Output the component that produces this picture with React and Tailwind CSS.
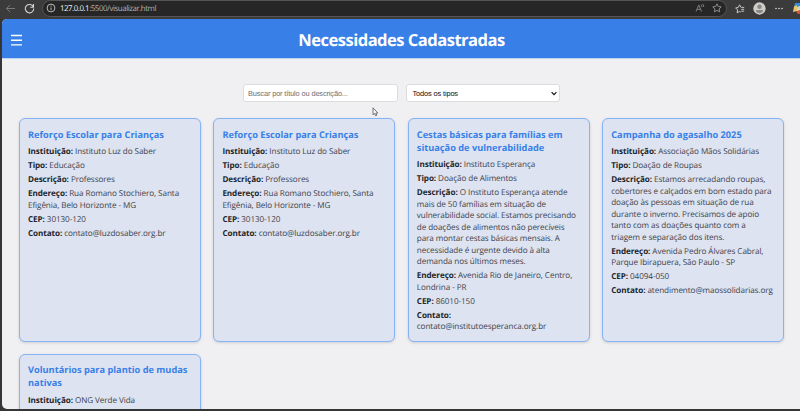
import React from "react";

const cards = [
  {
    title: ["Reforço Escolar para Crianças"],
    fields: [
      ["Instituição:", "Instituto Luz do Saber"],
      ["Tipo:", "Educação"],
      ["Descrição:", "Professores"],
      ["Endereço:", "Rua Romano Stochiero, Santa", "Efigênia, Belo Horizonte - MG"],
      ["CEP:", "30130-120"],
      ["Contato:", "contato@luzdosaber.org.br"],
    ],
  },
  {
    title: ["Reforço Escolar para Crianças"],
    fields: [
      ["Instituição:", "Instituto Luz do Saber"],
      ["Tipo:", "Educação"],
      ["Descrição:", "Professores"],
      ["Endereço:", "Rua Romano Stochiero, Santa", "Efigênia, Belo Horizonte - MG"],
      ["CEP:", "30130-120"],
      ["Contato:", "contato@luzdosaber.org.br"],
    ],
  },
  {
    title: ["Cestas básicas para famílias em", "situação de vulnerabilidade"],
    fields: [
      ["Instituição:", "Instituto Esperança"],
      ["Tipo:", "Doação de Alimentos"],
      [
        "Descrição:",
        "O Instituto Esperança atende",
        "mais de 50 famílias em situação de",
        "vulnerabilidade social. Estamos precisando",
        "de doações de alimentos não perecíveis",
        "para montar cestas básicas mensais. A",
        "necessidade é urgente devido à alta",
        "demanda nos últimos meses.",
      ],
      ["Endereço:", "Avenida Rio de Janeiro, Centro,", "Londrina - PR"],
      ["CEP:", "86010-150"],
      ["Contato:", "", "contato@institutoesperanca.org.br"],
    ],
  },
  {
    title: ["Campanha do agasalho 2025"],
    fields: [
      ["Instituição:", "Associação Mãos Solidárias"],
      ["Tipo:", "Doação de Roupas"],
      [
        "Descrição:",
        "Estamos arrecadando roupas,",
        "cobertores e calçados em bom estado para",
        "doação às pessoas em situação de rua",
        "durante o inverno. Precisamos de apoio",
        "tanto com as doações quanto com a",
        "triagem e separação dos itens.",
      ],
      ["Endereço:", "Avenida Pedro Álvares Cabral,", "Parque Ibirapuera, São Paulo - SP"],
      ["CEP:", "04094-050"],
      ["Contato:", "atendimento@maossolidarias.org"],
    ],
  },
  {
    title: ["Voluntários para plantio de mudas", "nativas"],
    fields: [["Instituição:", "ONG Verde Vida"]],
  },
];

function Card({ title, fields }) {
  return (
    <article className="min-w-0 whitespace-nowrap rounded-[6px] border border-[#86b3f3] bg-[#dde3f0] px-[8px] pt-[8.5px] pb-[8.5px] shadow-[0_1px_3px_rgba(0,0,0,0.14)]">
      <h2 className="mb-[5.6px] text-[9.23px] font-bold leading-[13px] text-[#3880e8]">
        {title.map((line) => (
          <span key={line} className="block">{line}</span>
        ))}
      </h2>
      {fields.map(([label, first, ...rest]) => (
        <p key={label} className="mb-[2.5px] text-[8.15px] leading-[11.5px] tracking-[-0.08px] text-[#3d424b]">
          <strong className="font-bold text-[#23262c]">{label}</strong> {first}
          {rest.map((line) => (
            <span key={line} className="block">{line}</span>
          ))}
        </p>
      ))}
    </article>
  );
}

function BrowserBar() {
  return (
    <div className="flex h-[19px] shrink-0 items-start bg-[#3b3b3b] text-[#d5d5d5]">
      <svg className="ml-[5px] mt-[3px] h-[11px] w-[11px]" viewBox="0 0 11 11" fill="none" stroke="#777" strokeWidth="1">
        <path d="M10 5.5H1.5M5.3 1.7L1.5 5.5l3.8 3.8" />
      </svg>
      <svg className="ml-[8px] mt-[3px] h-[11px] w-[11px]" viewBox="0 0 11 11" fill="none" stroke="#d5d5d5" strokeWidth="1.1">
        <path d="M9.4 4.1A4.2 4.2 0 1 0 9.7 5.6M9.5 1v3.2H6.3" />
      </svg>
      <div className="ml-[7px] mt-[-0.5px] flex h-[17.5px] w-[687px] items-center rounded-full border border-[#555] bg-[#262626] pl-[3px] pr-[4px]">
        <svg className="h-[10px] w-[10px]" viewBox="0 0 10 10" fill="none" stroke="#c8c8c8" strokeWidth="0.9">
          <circle cx="5" cy="5" r="3.9" />
          <path d="M5 4.5v2.7M5 2.7v1" />
        </svg>
        <span className="ml-[4px] mt-[1px] whitespace-nowrap text-[7.9px] leading-[12px] tracking-[-0.45px] text-[#b0b0b0]">
          <span className="font-medium text-[#f2f2f2]">127.0.0.1</span>:5500/visualizar.html
        </span>
        <svg className="ml-auto h-[10px] w-[10px]" viewBox="0 0 10 10" fill="none" stroke="#888" strokeWidth="0.9">
          <path d="M1 8.5L3.8 2l2.7 6.5M2 6.3h3.7M6 1.7q1 .9.9 2.2M7.5.8q1.4 1.3 1.2 3.2" />
        </svg>
        <svg className="ml-[7px] h-[10px] w-[10px]" viewBox="0 0 10 10" fill="none" stroke="#999" strokeWidth="0.9" strokeLinejoin="round">
          <path d="M5 .8l1.3 2.7 2.9.4-2.1 2 .5 2.9L5 7.4 2.4 8.8l.5-2.9-2.1-2 2.9-.4z" />
        </svg>
      </div>
      <svg className="ml-[8px] mt-[4px] h-[10px] w-[10px]" viewBox="0 0 10 10" fill="none" stroke="#d5d5d5" strokeWidth="0.9" strokeLinejoin="round">
        <path d="M6.6 3.4L6 3.3 4.6.8 3.2 3.5.6 3.9l2 2-.5 2.9 2.6-1.4 1.1.7M6.6 3.4h2.6M6.3 5.3h2.9M6.3 7.2h2.9" />
      </svg>
      <svg className="ml-[8px] mt-[2px] h-[13px] w-[13px]" viewBox="0 0 13 13">
        <circle cx="6.5" cy="6.5" r="6.2" fill="#d0ceca" />
        <circle cx="6.5" cy="4.7" r="2.2" fill="#8a8886" />
        <path d="M2.8 8h7.4q-.5 3.3-3.7 3.3T2.8 8" fill="#8a8886" />
      </svg>
      <svg className="ml-[9px] mt-[7px] h-[3px] w-[8px]" viewBox="0 0 8 3" fill="#dedede">
        <circle cx="1" cy="1.5" r=".8" /><circle cx="4" cy="1.5" r=".8" /><circle cx="7" cy="1.5" r=".8" />
      </svg>
      <svg className="ml-[10px] mt-[2px] h-[13px] w-[7px]" viewBox="0 0 7 13">
        <path d="M2 1h5v5H1z" fill="#2f8de0" />
        <path d="M1 4.5L4 3v6l-4 1z" fill="#e6c56c" />
        <path d="M4 5l3-1v5H4z" fill="#d9d5bb" />
        <path d="M3 9.5L7 8v4H5z" fill="#d95236" />
      </svg>
    </div>
  );
}

export default function App() {
  return (
    <div className="relative flex h-[411px] w-[800px] flex-col overflow-hidden bg-[#353535] font-['Open_Sans','Noto_Sans',sans-serif] [text-rendering:geometricPrecision]">
      <BrowserBar />
      <div className="ml-[2px] flex h-[390px] flex-col overflow-hidden rounded-l-[5px] bg-[#f0f0f2]">
        <header className="flex h-[40px] shrink-0 items-center border-b border-[#bdd3f4] bg-[#3880e8]">
          <svg className="ml-[9px] mt-[2px] h-[12px] w-[11px]" viewBox="0 0 11 12" stroke="#fff" strokeWidth="1.4">
            <path d="M0 1.5h11M0 6.2h11M0 10.9h11" />
          </svg>
          <h1 className="mr-[19px] mt-[2px] flex-1 whitespace-nowrap text-center text-[16.6px] font-bold leading-[24px] tracking-[-0.55px] text-white">
            Necessidades Cadastradas
          </h1>
        </header>
        <div className="ml-[241px] mt-[24.5px] flex h-[18.5px] shrink-0 gap-[8px] font-['Liberation_Sans',Arial,sans-serif] text-[7.4px] tracking-[-0.13px]">
          <div className="flex w-[154.5px] items-center whitespace-nowrap rounded-[3px] border border-[#dcdcde] bg-white pl-[4px] pt-[1px] text-[#707070]">
            Buscar por título ou descrição...
          </div>
          <div className="flex w-[154.5px] items-center justify-between rounded-[3px] border border-[#dcdcde] bg-white pl-[6px] pr-[2px] pt-[1px] text-[#111]">
            Todos os tipos
            <svg className="h-[5px] w-[6px]" viewBox="0 0 6 5" fill="none" stroke="#111" strokeWidth="1.2">
              <path d="M.6 1.2L3 3.6l2.4-2.4" />
            </svg>
          </div>
        </div>
        <main className="ml-[17px] mt-[16.4px] grid w-[765px] shrink-0 grid-cols-4 grid-rows-[223.5px_223.5px] gap-x-[12.6px] gap-y-[12px]">
          {cards.map((card, i) => (
            <Card key={i} {...card} />
          ))}
        </main>
      </div>
      <svg className="absolute left-[372px] top-[107px] h-[10px] w-[7px]" viewBox="0 0 7 10" fill="#fafafa" stroke="#55555d" strokeWidth="0.8">
        <path d="M1 .8v7l1.6-1.4 1 2.4 1.2-.5-1-2.3h2z" />
      </svg>
    </div>
  );
}
